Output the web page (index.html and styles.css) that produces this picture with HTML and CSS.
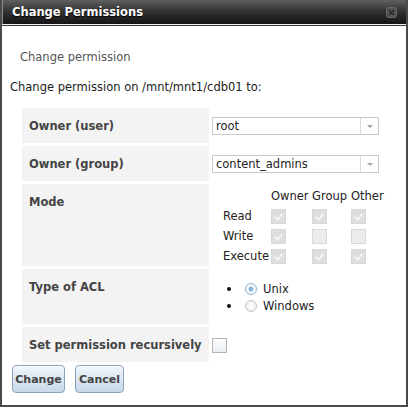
FILE: index.html
```html
<!DOCTYPE html>
<html lang="en">
<head>
  <meta charset="UTF-8">
  <title>Change Permissions</title>
  <link rel="stylesheet" href="styles.css">
</head>
<body>
  <div class="dialog">
    <div class="titlebar">
      <span class="title">Change Permissions</span>
      <svg class="close" width="11" height="11" viewBox="0 0 11 11">
        <rect x="0.5" y="0.5" width="10" height="10" rx="2" fill="#555" stroke="#666"/>
        <path d="M3 3 L8 8 M8 3 L3 8" stroke="#2a2a2a" stroke-width="1.6"/>
      </svg>
    </div>
    <div class="content">
      <div class="subtitle">Change permission</div>
      <div class="intro">Change permission on /mnt/mnt1/cdb01 to:</div>

      <table class="form">
        <tr class="row-s">
          <th>Owner (user)</th>
          <td>
            <div class="select"><span>root</span><i class="arrow"></i></div>
          </td>
        </tr>
        <tr class="row-s">
          <th>Owner (group)</th>
          <td>
            <div class="select"><span>content_admins</span><i class="arrow"></i></div>
          </td>
        </tr>
        <tr class="row-mode">
          <th>Mode</th>
          <td>
            <table class="mode">
              <tr><td></td><td>Owner</td><td>Group</td><td>Other</td></tr>
              <tr><td>Read</td><td><span class="cb on"></span></td><td><span class="cb on"></span></td><td><span class="cb on"></span></td></tr>
              <tr><td>Write</td><td><span class="cb on"></span></td><td><span class="cb"></span></td><td><span class="cb"></span></td></tr>
              <tr><td>Execute</td><td><span class="cb on"></span></td><td><span class="cb on"></span></td><td><span class="cb on"></span></td></tr>
            </table>
          </td>
        </tr>
        <tr class="row-acl">
          <th>Type of ACL</th>
          <td>
            <ul class="radios">
              <li><span class="dot"></span><span class="radio checked"></span>Unix</li>
              <li><span class="dot"></span><span class="radio"></span>Windows</li>
            </ul>
          </td>
        </tr>
        <tr class="row-s">
          <th>Set permission recursively</th>
          <td><span class="check"></span></td>
        </tr>
      </table>

      <div class="buttons">
        <button class="btn btn-change">Change</button>
        <button class="btn btn-cancel">Cancel</button>
      </div>
    </div>
  </div>
</body>
</html>
```

FILE: styles.css
```css
body {
  margin: 0;
  font-family: "DejaVu Sans", Verdana, sans-serif;
  font-size: 11.5px;
  color: #222;
  background: #fff;
}
.dialog {
  width: 404px;
  height: 405px;
  border: 2px solid #4a4a4a;
  border-top: none;
  background: #fff;
}
.titlebar {
  height: 24px;
  display: flex;
  align-items: center;
  justify-content: space-between;
  padding: 0 9px 0 10px;
  background: linear-gradient(#606060, #333 45%, #151515);
  border-bottom: 1px solid #f2f2f2;
  box-shadow: inset 1px 0 0 #8a8a8a;
}
.title {
  color: #fff;
  font-weight: bold;
  font-size: 11.5px;
  text-shadow: 0 1px 1px #000;
}
.close {
  display: block;
}
.content {
  border-top: 1px solid #3a3a3a;
}
.subtitle {
  margin: 24px 0 0 18px;
  line-height: 14px;
  color: #555;
}
.intro {
  margin: 16px 0 0 8px;
  line-height: 14px;
}
.form {
  margin: 11px 0 0 17px;
  border-spacing: 3px;
}
.form th {
  width: 173px;
  padding: 11px 7px 10px;
  background: #f3f3f3;
  color: #444;
  text-align: left;
  vertical-align: top;
  line-height: 14px;
  white-space: nowrap;
}
.form > tbody > tr > td {
  vertical-align: top;
  padding: 0;
}
.row-s th { height: 14px; }
.row-mode th { height: 61px; }
.row-acl th { height: 34px; }

.select {
  display: flex;
  align-items: center;
  width: 165px;
  height: 16px;
  margin-top: 9px;
  border: 1px solid #c8c8c8;
  background: #fff;
}
.select span {
  flex: 1;
  padding-left: 3px;
}
.arrow {
  width: 17px;
  height: 16px;
  border-left: 1px solid #dcdcdc;
  position: relative;
}
.arrow::after {
  content: "";
  position: absolute;
  left: 6px;
  top: 7px;
  border-left: 3px solid transparent;
  border-right: 3px solid transparent;
  border-top: 3px solid #a8a8a8;
}

.mode {
  margin: 2px 0 0 11px;
  border-collapse: collapse;
  line-height: 14px;
}
.mode td {
  height: 20px;
  padding: 0;
  vertical-align: middle;
}
.mode td:nth-child(1) { width: 48px; }
.mode td:nth-child(2) { width: 41px; }
.mode td:nth-child(3) { width: 39px; }
.cb {
  display: block;
  width: 13px;
  height: 13px;
  border: 1px solid #d8d8d8;
  background: #ececec;
  position: relative;
}
.cb.on {
  background: #dedede;
}
.cb.on::after {
  content: "";
  position: absolute;
  left: 4px;
  top: 2px;
  width: 3px;
  height: 6px;
  border-right: 2px solid #f4f4f4;
  border-bottom: 2px solid #f4f4f4;
  transform: rotate(40deg);
}

.radios {
  margin: 11px 0 0 0;
  padding-left: 15px;
  list-style: none;
}
.radios li {
  display: flex;
  align-items: center;
  height: 17px;
}
.dot {
  width: 4px;
  height: 4px;
  border-radius: 50%;
  background: #111;
  margin-right: 14px;
}
.radio {
  width: 12px;
  height: 12px;
  margin-right: 6px;
  border: 1px solid #c4c4c4;
  border-radius: 50%;
  background: radial-gradient(#fff, #ececec);
  box-sizing: border-box;
}
.radio.checked {
  border-color: #8fb2cc;
  background: radial-gradient(circle, #8bb5d6 0 2px, #fff 3px, #e4eef6 100%);
}

.check {
  display: block;
  width: 13px;
  height: 13px;
  margin-top: 11px;
  border: 1px solid #b4b4b4;
  background: linear-gradient(#fff, #e9eef5);
}

.buttons {
  display: flex;
  gap: 10px;
  margin: 0 0 0 10px;
}
.btn {
  height: 28px;
  padding: 0;
  font-family: inherit;
  font-size: 11px;
  font-weight: bold;
  color: #444;
  border: 1px solid #8aa3bd;
  border-radius: 4px;
  background: linear-gradient(#f2f6fb, #dbe6f2 50%, #c9d9ea);
  box-shadow: inset 0 1px 0 #fff;
}
.btn-change { width: 53px; }
.btn-cancel { width: 49px; }
```
